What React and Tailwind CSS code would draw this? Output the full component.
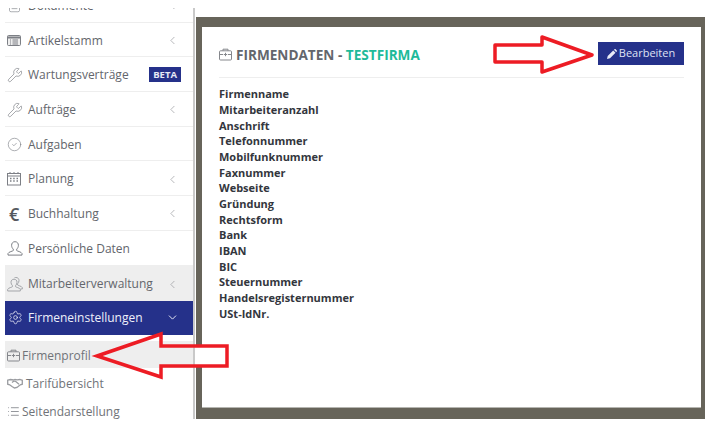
import React from "react";
import { ChevronDown, ChevronLeft, CircleCheck, FileText, List, Settings, Wrench } from "lucide-react";

const font = "font-['Open_Sans',sans-serif]";

const CardIcon = () => (
  <svg width="14" height="11" viewBox="0 0 14 11" fill="none" stroke="#7c7f85" strokeWidth="1">
    <rect x="0.5" y="0.5" width="13" height="10" rx="1" fill="#eeeeee" />
    <path d="M0.5 2.5h13" strokeWidth="2" />
    <path d="M3 5h1M5.5 5H11M3 7h1M5.5 7H11M3 9h1M5.5 9H11" />
  </svg>
);

const CalendarIcon = () => (
  <svg width="14" height="14" viewBox="0 0 14 14" fill="none" stroke="#7c7f85" strokeWidth="1">
    <rect x="0.5" y="1.5" width="13" height="11.5" />
    <path d="M3 0v2M7 0v2M11 0v2M0.5 4h13" />
    <path d="M3 6.5h1.5M6.2 6.5h1.5M9.5 6.5H11M3 9h1.5M6.2 9h1.5M9.5 9H11" strokeWidth="1.4" />
  </svg>
);

const PersonIcon = ({ color = "#7c7f85" }) => (
  <svg width="16" height="15" viewBox="0 0 16 15" fill="none" stroke={color} strokeWidth="1">
    <path d="M8 0.7c-2.2 0-3.4 1.6-3.4 3.6 0 1.6.7 3 1.7 3.8v1.4c0 .6-4.8 1.3-5.3 3v1.6h14v-1.6c-.5-1.7-5.3-2.4-5.3-3V8.1c1-.8 1.7-2.2 1.7-3.8 0-2-1.2-3.6-3.4-3.6z" />
  </svg>
);

const PeopleIcon = () => (
  <svg width="17" height="15" viewBox="0 0 17 15" fill="none" stroke="#a3a5a9" strokeWidth="1">
    <path d="M7 2.2c-2 0-3 1.4-3 3.1 0 1.4.6 2.5 1.4 3.2v1.2c0 .5-4.2 1.1-4.7 2.6v1.7h12.6v-1.7c-.5-1.5-4.7-2.1-4.7-2.6V8.5c.8-.7 1.4-1.8 1.4-3.2 0-1.7-1-3.1-3-3.1z" />
    <path d="M7.5.7c.5-.2 1-.2 1.5-.2 2 0 3 1.4 3 3.1 0 1.4-.6 2.5-1.4 3.2v1.2c0 .5 4.2 1.1 4.7 2.6V12h-2" />
  </svg>
);

const BriefcaseIcon = ({ color = "#85878c" }) => (
  <svg width="13" height="13" viewBox="0 0 13 13" fill="none" stroke={color} strokeWidth="1">
    <rect x="0.5" y="2.8" width="12" height="9.2" rx="1" />
    <path d="M4 2.8V1.2h5v1.6M0.5 6.5h3.5M9 6.5h3.5M4.8 6.5h3.4M6.5 4.8v3.4" />
  </svg>
);

const ShakeIcon = () => (
  <svg width="16" height="11" viewBox="0 0 16 11" fill="none" stroke="#9a9ca0" strokeWidth="1.3">
    <path d="M0.7 2.2L3.5 1.5 6.5 2 8 1.5l2 .3 2.8-.3 2.5.8v3.9l-2 .6L10 9.5 7.5 10 5 8.500 2.700 6.800.7 6.200z" />
    <path d="M5 4.500c1.200-1 2.500-1.500 3.500-1.200l3.500 3" />
  </svg>
);

const rows = [
  { label: "Dokumente", icon: <FileText size={15} strokeWidth={1} color="#7c7f85" />, arrow: true, clipped: true },
  { label: "Artikelstamm", icon: <CardIcon />, arrow: true },
  { label: "Wartungsverträge", icon: <Wrench size={16} strokeWidth={1} color="#7c7f85" />, beta: true },
  { label: "Aufträge", icon: <Wrench size={16} strokeWidth={1} color="#7c7f85" />, arrow: true },
  { label: "Aufgaben", icon: <CircleCheck size={15} strokeWidth={1} color="#7c7f85" /> },
  { label: "Planung", icon: <CalendarIcon />, arrow: true },
  { label: "Buchhaltung", icon: <span className="ml-[2px] text-[18px] leading-none font-semibold text-[#55585e]">€</span>, arrow: true },
  { label: "Persönliche Daten", icon: <PersonIcon /> },
];

const fields = [
  "Firmenname", "Mitarbeiteranzahl", "Anschrift", "Telefonnummer", "Mobilfunknummer",
  "Faxnummer", "Webseite", "Gründung", "Rechtsform", "Bank", "IBAN", "BIC",
  "Steuernummer", "Handelsregisternummer", "USt-IdNr.",
];

const MenuRow = ({ label, icon, arrow, beta, clipped }) => (
  <div className={`flex h-[34.7px] shrink-0 items-center border-b border-[#eeeeee] pt-[2px] pr-[14px] pl-[2px] ${clipped ? "-mt-[20px]" : ""}`}>
    <span className="flex w-[21px] justify-start">{icon}</span>
    <span className="flex-1 text-[12px] text-[#63666c]">{label}</span>
    {arrow && <ChevronLeft size={13} strokeWidth={1.2} color="#8f9196" />}
    {beta && <span className="-mt-[2px] -mr-[2px] bg-[#25318a] px-[4px] text-[9.5px] leading-[15px] font-bold text-[#e6e8f5]">BETA</span>}
  </div>
);

export default function App() {
  return (
    <div className={`${font} relative h-[444px] w-[717px] overflow-hidden bg-white`}>
      <div className="flex h-[419px] pt-[8px]">
        <aside className="ml-[5px] flex w-[190px] flex-col overflow-hidden border-r-2 border-[#c9c9c9]">
          {rows.map(r => <MenuRow key={r.label} {...r} />)}

          <div className="flex h-[35px] shrink-0 items-center bg-[#eeeeee] pt-[2px] pr-[14px] pl-[2px]">
            <span className="w-[21px]"><PeopleIcon /></span>
            <span className="flex-1 text-[12px] text-[#63666c]">Mitarbeiterverwaltung</span>
            <ChevronLeft size={13} strokeWidth={1.2} color="#8f9196" />
          </div>
          <div className="flex h-[34px] shrink-0 items-center bg-[#25318a] pr-[14px] pl-[3px]">
            <span className="w-[20px]"><Settings size={15} strokeWidth={1.2} color="#e8e9f5" /></span>
            <span className="flex-1 text-[12px] text-[#eef0fa]">Firmeneinstellungen</span>
            <ChevronDown size={13} strokeWidth={1.8} color="#e8e9f5" />
          </div>

          <div className="mt-[6px] flex h-[27px] shrink-0 items-center gap-[2px] bg-[#eeeeee] pt-[3px] pl-[2px] text-[12px] text-[#707378]">
            <BriefcaseIcon />
            <span>Firmenprofil</span>
          </div>
          <div className="flex h-[28px] shrink-0 items-center gap-[3px] pt-[4px] pl-[2px] text-[12px] text-[#707378]">
            <ShakeIcon />
            <span>Tarifübersicht</span>
          </div>
          <div className="flex h-[28px] shrink-0 items-center gap-[2px] pt-[4px] pl-[2px] text-[12px] text-[#707378]">
            <List size={13} strokeWidth={1.5} color="#7c7f85" />
            <span>Seitendarstellung</span>
          </div>
        </aside>

        <main className="mt-[9px] ml-[1px] w-[509px] border-t-[10px] border-r-[4px] border-b-[11px] border-l-[6px] border-[#67645a]">
          <div className="h-full border-b border-[#b5b5b0] bg-white px-[17px]">
            <div className="flex h-[51px] items-center justify-between border-b border-[#eeeeee] pt-[4px]">
              <h1 className="flex items-center gap-[4px] pt-[2px] text-[13.6px] font-bold text-[#63666c]">
                <BriefcaseIcon />
                <span>FIRMENDATEN - <span className="text-[#1fba9a]">TESTFIRMA</span></span>
              </h1>
              <button className="-mt-[1px] flex h-[23px] w-[86px] items-center justify-center gap-[2px] bg-[#25318a] text-[11px] text-[#dfe2f4]">
                <svg width="10" height="10" viewBox="0 0 10 10" fill="#e8eaf6"><path d="M0 10l.7-3L6.2 1.5l2.3 2.3L3 9.3zM6.9.8L7.6.2c.3-.3.7-.3 1 0l1.2 1.2c.3.3.3.7 0 1l-.7.7z" /></svg>
                Bearbeiten
              </button>
            </div>
            <ul className="mt-[8.4px] text-[11px] leading-[15.65px] font-bold text-[#33363d]">
              {fields.map(f => <li key={f}>{f}</li>)}
            </ul>
          </div>
        </main>
      </div>

      <svg className="absolute top-0 left-0" width="717" height="444" fill="none" stroke="#ed1c24" strokeWidth="3.5" strokeLinejoin="round">
        <rect x="196" y="346" width="31" height="20" fill="white" stroke="none" />
        <polygon points="495,45 542,45 542,37 592,55 542,72 542,62 495,62" />
        <polygon points="97,356 161,334 161,346 227,346 227,366 161,366 161,377" strokeLinejoin="miter" />
      </svg>
    </div>
  );
}
